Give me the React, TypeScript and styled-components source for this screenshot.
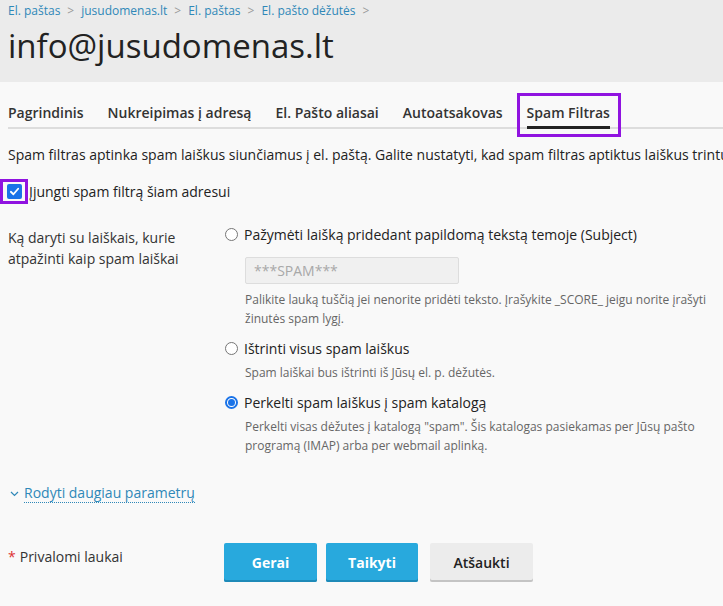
import React, { useState } from "react";
import styled, { createGlobalStyle } from "styled-components";

const Global = createGlobalStyle`
  html, body {
    margin: 0;
    padding: 0;
    background: #f9f9f9;
    overflow: hidden;
  }
  body {
    font-family: "Open Sans", "Noto Sans", sans-serif;
    color: #222;
    font-size: 14px;
  }
  * { box-sizing: border-box; }
`;

const Page = styled.div`
  width: 723px;
  min-height: 606px;
  overflow: hidden;
`;

const Header = styled.header`
  background: #ebebeb;
  height: 82px;
  padding: 0 8px;
`;

const Crumbs = styled.nav`
  display: flex;
  align-items: center;
  height: 20px;
  font-size: 12px;
  padding-top: 1px;
`;

const Crumb = styled.a`
  color: #2f88b8;
  text-decoration: none;
`;

const Sep = styled.span`
  color: #999;
  margin: 0 7px;
  font-size: 12px;
`;

const Title = styled.h1`
  margin: 6px 0 0;
  font-size: 33px;
  font-weight: 500;
  line-height: 40px;
  color: #222;
`;

const Body = styled.main`
  padding: 0 0 0 8px;
`;

const Tabs = styled.div`
  display: flex;
  gap: 24px;
  margin-top: 14px;
  border-bottom: 2px solid #ddd;
  height: 33px;
  margin-right: -8px;
`;

const Tab = styled.div<{ $active?: boolean }>`
  position: relative;
  font-size: 14px;
  font-weight: 600;
  color: #333;
  line-height: 20px;
  padding-top: 7px;
  white-space: nowrap;
  border-bottom: 3px solid ${(p) => (p.$active ? "#222" : "transparent")};
  margin-bottom: -2px;
`;

const Focus = styled.span`
  position: absolute;
  left: -10px;
  right: -11px;
  top: -3px;
  bottom: -11px;
  border: 3px solid #9013e0;
  pointer-events: none;
`;

const Intro = styled.p`
  margin: 16px 0 0;
  white-space: nowrap;
  line-height: 20px;
`;

const CheckRow = styled.label`
  display: flex;
  align-items: center;
  margin: 14px 0 0 -8px;
  line-height: 20px;
  position: relative;
`;

const CheckFrame = styled.span`
  display: inline-flex;
  align-items: center;
  justify-content: center;
  width: 28px;
  height: 25px;
  border: 3px solid #9013e0;
  margin-right: 1px;
`;

const CheckBox = styled.span`
  width: 15px;
  height: 15px;
  border-radius: 2px;
  background: #1a73e8;
  display: inline-flex;
  align-items: center;
  justify-content: center;
`;

const Row = styled.div`
  display: grid;
  grid-template-columns: 217px 1fr;
  margin-top: 20px;
`;

const Label = styled.div`
  line-height: 21px;
  color: #333;
  padding-top: 3px;
`;

const Options = styled.div`
  display: flex;
  flex-direction: column;
`;

const Option = styled.div`
  margin-bottom: 10px;
`;

const RadioLine = styled.label`
  display: flex;
  align-items: center;
  height: 22px;
  gap: 5px;
  color: #222;
  cursor: pointer;
  margin-top: -1px;
`;

const RadioDot = styled.span<{ $on?: boolean }>`
  width: 13px;
  height: 13px;
  border-radius: 50%;
  border: ${(p) => (p.$on ? "2px solid #1a73e8" : "1px solid #767676")};
  background: #fff;
  display: inline-flex;
  align-items: center;
  justify-content: center;
  margin: 0 1px 0 0;
  &::after {
    content: "";
    display: ${(p) => (p.$on ? "block" : "none")};
    width: 7px;
    height: 7px;
    border-radius: 50%;
    background: #1a73e8;
  }
`;

const Sub = styled.div`
  padding-left: 20px;
`;

const Field = styled.div`
  width: 214px;
  margin-top: 12px;
`;

const TextInput = styled.input`
  display: block;
  width: 100%;
  height: 27px;
  margin: 0;
  background: #f0f0f0;
  border: 1px solid #ddd;
  border-radius: 2px;
  padding: 0 8px;
  font: inherit;
  font-size: 14px;
  color: #999;
  &::placeholder { color: #a8a8a8; }
`;

const Hint = styled.div<{ $top?: number }>`
  font-size: 12px;
  line-height: 19px;
  color: #666;
  margin-top: ${(p) => p.$top ?? 4}px;
  padding-right: 4px;
`;

const More = styled.div`
  display: flex;
  align-items: center;
  gap: 5px;
  margin-top: 19px;
  padding-left: 2px;
`;

const MoreLink = styled.a`
  color: #2f88b8;
  font-size: 14px;
  line-height: 18px;
  text-decoration: none;
  border-bottom: 1px dotted #2f88b8;
`;

const Footer = styled.div`
  display: grid;
  grid-template-columns: 216px auto;
  margin-top: 40px;
`;

const Required = styled.div`
  padding-top: 4px;
  color: #333;
  span { color: #d33; margin-right: 4px; }
`;

const Buttons = styled.div`
  display: flex;
  gap: 9px;
`;

const Button = styled.button<{ $primary?: boolean; $w: number }>`
  width: ${(p) => p.$w}px;
  height: 39px;
  border: 0;
  border-radius: 2px;
  font: inherit;
  font-size: 14px;
  color: ${(p) => (p.$primary ? "#fff" : "#222")};
  font-weight: ${(p) => (p.$primary ? 700 : 600)};
  background: ${(p) => (p.$primary ? "#28a9dd" : "#ececec")};
  box-shadow: inset 0 -2px 0 ${(p) => (p.$primary ? "#1e8ab8" : "#c4c4c4")};
  margin-left: ${(p) => (p.$primary ? 0 : 3)}px;
  cursor: pointer;
`;

const Check = () => (
  <svg width="11" height="11" viewBox="0 0 12 12">
    <path d="M2 6.3 L4.8 9 L10 3" fill="none" stroke="#fff" strokeWidth="2" strokeLinecap="round" strokeLinejoin="round" />
  </svg>
);

const Chevron = () => (
  <svg width="9" height="6" viewBox="0 0 9 6">
    <path d="M1 1 L4.5 4.5 L8 1" fill="none" stroke="#2f88b8" strokeWidth="1.2" />
  </svg>
);

export default function App() {
  const [mode, setMode] = useState(2);
  const options = [
    {
      label: "Pažymėti laišką pridedant papildomą tekstą temoje (Subject)",
      input: true,
      hint: "Palikite lauką tuščią jei nenorite pridėti teksto. Įrašykite _SCORE_ jeigu norite įrašyti žinutės spam lygį.",
    },
    { label: "Ištrinti visus spam laiškus", hint: "Spam laiškai bus ištrinti iš Jūsų el. p. dėžutės." },
    {
      label: "Perkelti spam laiškus į spam katalogą",
      hint: 'Perkelti visas dėžutes į katalogą "spam". Šis katalogas pasiekamas per Jūsų pašto programą (IMAP) arba per webmail aplinką.',
    },
  ];
  return (
    <Page>
      <Global />
      <Header>
        <Crumbs>
          <Crumb>El. paštas</Crumb>
          <Sep>&gt;</Sep>
          <Crumb>jusudomenas.lt</Crumb>
          <Sep>&gt;</Sep>
          <Crumb>El. paštas</Crumb>
          <Sep>&gt;</Sep>
          <Crumb>El. pašto dėžutės</Crumb>
          <Sep>&gt;</Sep>
        </Crumbs>
        <Title>info@jusudomenas.lt</Title>
      </Header>
      <Body>
        <Tabs>
          <Tab>Pagrindinis</Tab>
          <Tab>Nukreipimas į adresą</Tab>
          <Tab>El. Pašto aliasai</Tab>
          <Tab>Autoatsakovas</Tab>
          <Tab $active>
            Spam Filtras
            <Focus />
          </Tab>
        </Tabs>
        <Intro>
          Spam filtras aptinka spam laiškus siunčiamus į el. paštą. Galite nustatyti, kad spam filtras aptiktus laiškus trintų arba perkeltų į atskirą katalogą.
        </Intro>
        <CheckRow>
          <CheckFrame>
            <CheckBox>
              <Check />
            </CheckBox>
          </CheckFrame>
          Įjungti spam filtrą šiam adresui
        </CheckRow>
        <Row>
          <Label>
            Ką daryti su laiškais, kurie
            <br />
            atpažinti kaip spam laiškai
          </Label>
          <Options>
            {options.map((o, i) => (
              <Option key={i}>
                <RadioLine onClick={() => setMode(i)}>
                  <RadioDot $on={mode === i} />
                  {o.label}
                </RadioLine>
                <Sub>
                  {o.input && (
                    <Field>
                      <TextInput placeholder="***SPAM***" />
                    </Field>
                  )}
                  <Hint $top={o.input ? 6 : 4}>{o.hint}</Hint>
                </Sub>
              </Option>
            ))}
          </Options>
        </Row>
        <More>
          <Chevron />
          <MoreLink>Rodyti daugiau parametrų</MoreLink>
        </More>
        <Footer>
          <Required>
            <span>*</span>Privalomi laukai
          </Required>
          <Buttons>
            <Button $primary $w={93}>Gerai</Button>
            <Button $primary $w={92}>Taikyti</Button>
            <Button $w={103}>Atšaukti</Button>
          </Buttons>
        </Footer>
      </Body>
    </Page>
  );
}
